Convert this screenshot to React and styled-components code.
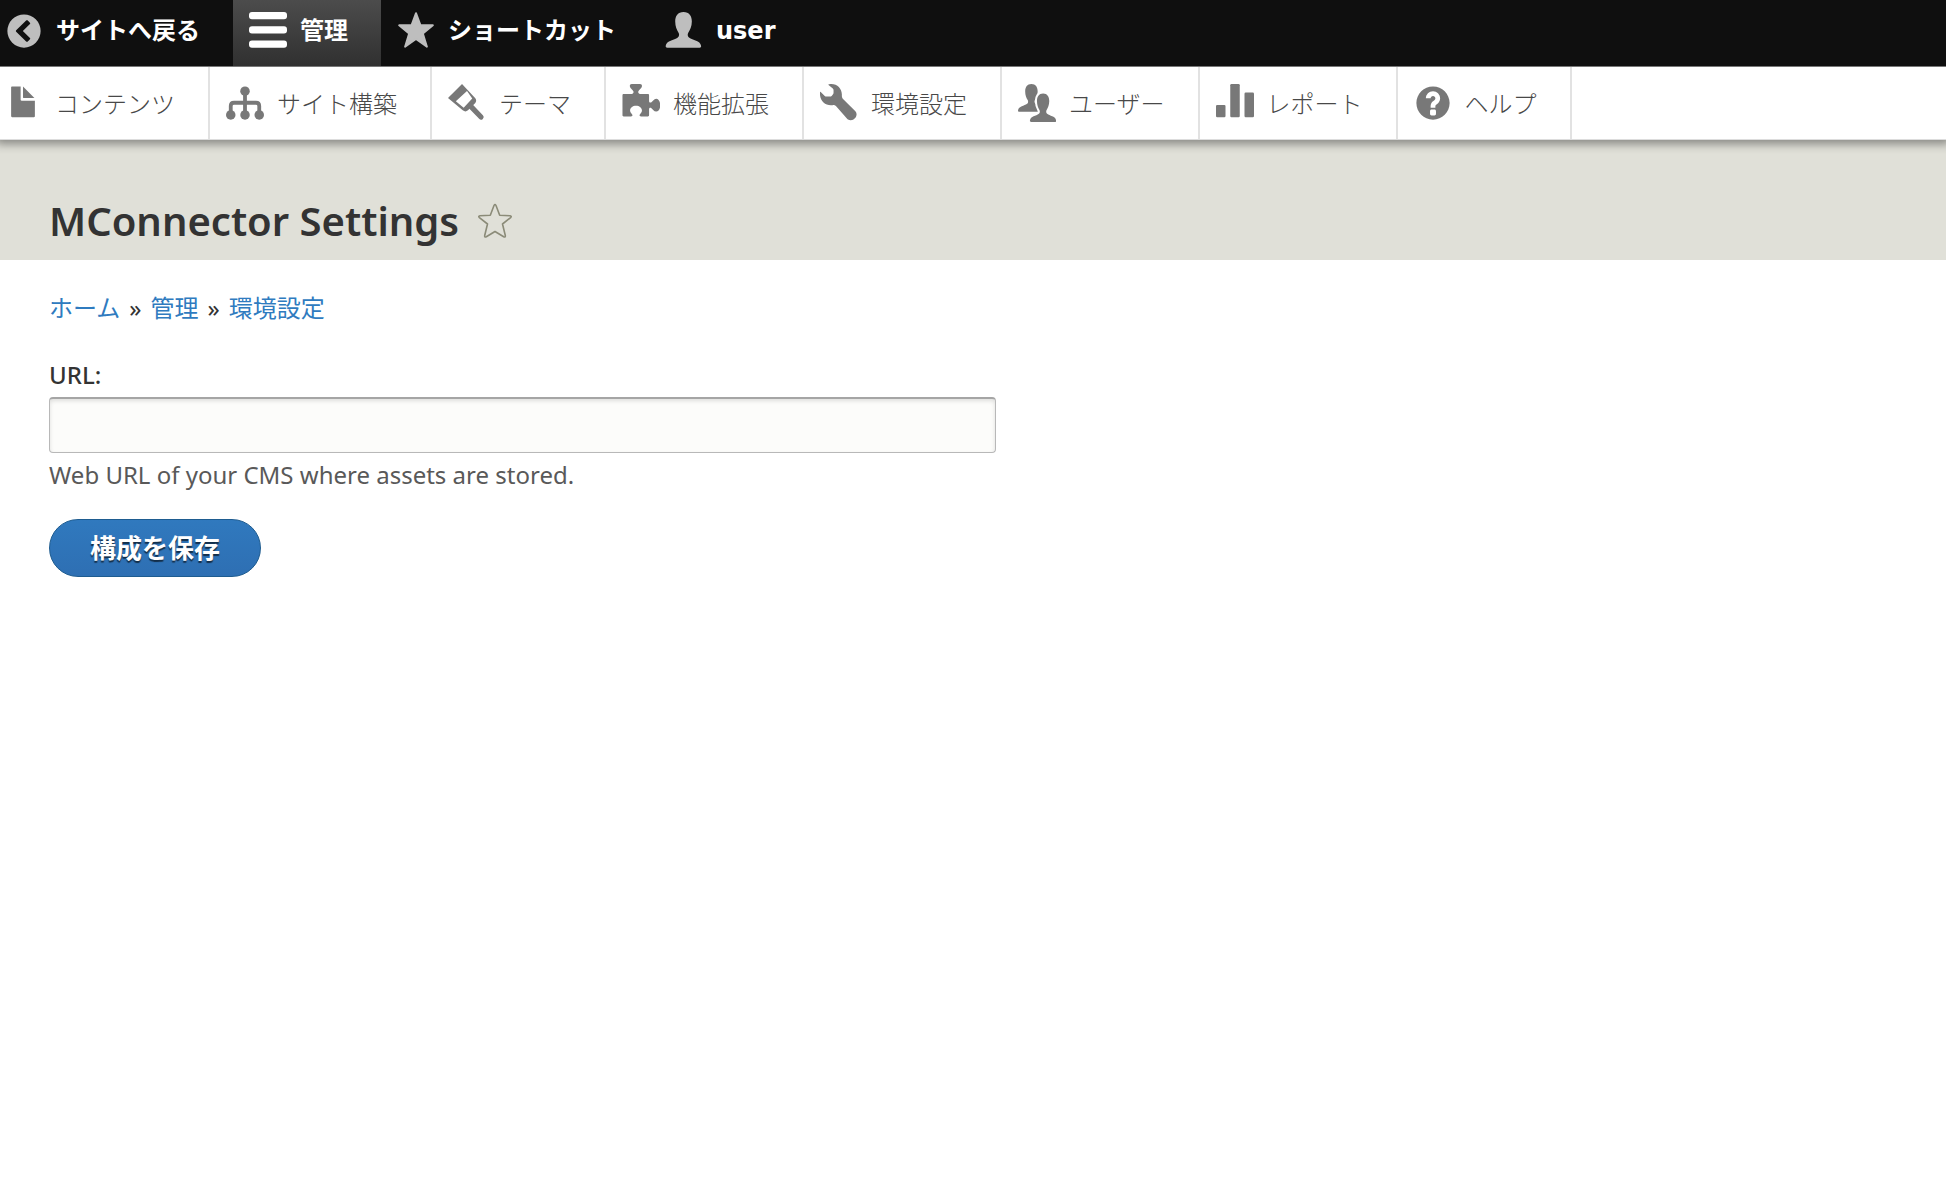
import styled, { createGlobalStyle } from "styled-components";

const MENU = [
  { label: "コンテンツ", icon: FileIcon },
  { label: "サイト構築", icon: SitemapIcon },
  { label: "テーマ", icon: BrushIcon },
  { label: "機能拡張", icon: PuzzleIcon },
  { label: "環境設定", icon: WrenchIcon },
  { label: "ユーザー", icon: PeopleIcon },
  { label: "レポート", icon: ChartIcon },
  { label: "ヘルプ", icon: HelpIcon },
];

export default function App() {
  return (
    <>
      <GlobalStyle />
      <Toolbar aria-label="管理ツールバー">
        <Tab href="#">
          <BackIcon />
          サイトへ戻る
        </Tab>
        <Tab href="#" $active>
          <MenuIcon />
          管理
        </Tab>
        <Tab href="#">
          <StarIcon />
          ショートカット
        </Tab>
        <Tab href="#">
          <UserIcon />
          user
        </Tab>
      </Toolbar>
      <Tray aria-label="管理メニュー">
        {MENU.map(({ label, icon: Glyph }) => (
          <TrayLink href="#" key={label}>
            <Glyph />
            {label}
          </TrayLink>
        ))}
      </Tray>
      <Header>
        <Title>MConnector Settings</Title>
        <ShortcutLink href="#" aria-label="ショートカットに追加">
          <OutlineStarIcon />
        </ShortcutLink>
      </Header>
      <Main>
        <Breadcrumb aria-label="パンくず">
          <Crumb href="#">ホーム</Crumb>
          <span>»</span>
          <Crumb href="#">管理</Crumb>
          <span>»</span>
          <Crumb href="#">環境設定</Crumb>
        </Breadcrumb>
        <form onSubmit={(e) => e.preventDefault()}>
          <Label htmlFor="url">URL:</Label>
          <TextInput id="url" type="text" aria-describedby="url-help" />
          <Description id="url-help">
            Web URL of your CMS where assets are stored.
          </Description>
          <SaveButton type="submit">構成を保存</SaveButton>
        </form>
      </Main>
    </>
  );
}

function BackIcon() {
  return (
    <Icon viewBox="0 0 16 16">
      <path
        fillRule="evenodd"
        d="M8 1a7 7 0 1 0 0 14A7 7 0 0 0 8 1zM10.5 5.1 7.5 8l3 2.9c.2.2.2.4 0 .6l-.9.9c-.2.2-.5.2-.7 0L4.7 8.3c-.2-.2-.2-.4 0-.6l4.2-4.1c.2-.2.5-.2.7 0l.9.9c.2.2.2.4 0 .6z"
      />
    </Icon>
  );
}

function MenuIcon() {
  return (
    <Icon viewBox="0 0 16 16">
      <rect width="16" height="3" rx="1.25" />
      <rect y="6" width="16" height="3" rx="1.25" />
      <rect y="12" width="16" height="3" rx="1.25" />
    </Icon>
  );
}

function StarIcon() {
  return (
    <Icon viewBox="0 0 16 16">
      <path
        stroke="currentColor"
        strokeWidth="0.8"
        strokeLinejoin="round"
        d="M8 .5l1.9 5.1h5.2l-4.2 3.5 1.7 5.5L8 11.4l-4.6 3.2 1.7-5.5L.9 5.6h5.2z"
      />
    </Icon>
  );
}

const PERSON =
  "M7.8 0c2.4 0 3.5 1.7 3.5 4 0 2.1-.8 3.6-1.5 4.7-.4.6-.3 1.6.3 2 1.6 1.2 4.7 1.2 5.1 3.5.1.5-.2.8-.6.8H1c-.5 0-.8-.3-.7-.8.4-2.3 3.5-2.3 5.1-3.5.6-.4.7-1.4.3-2C5 7.6 4.3 6.1 4.3 4c0-2.3 1.1-4 3.5-4z";

function UserIcon() {
  return (
    <Icon viewBox="0 0 16 16">
      <path d={PERSON} />
    </Icon>
  );
}

function FileIcon() {
  return (
    <Icon viewBox="0 0 16 16">
      <path d="M3.4 1H7v5.6c0 .2.2.4.4.4H13v6.6c0 .2-.2.4-.4.4H3.4c-.2 0-.4-.2-.4-.4V1.4c0-.2.2-.4.4-.4zM8 1.1l4.8 4.8H8.2c-.1 0-.2-.1-.2-.2z" />
    </Icon>
  );
}

function SitemapIcon() {
  return (
    <Icon viewBox="0 0 16 16">
      <path
        fill="none"
        stroke="currentColor"
        strokeWidth="1.6"
        d="M2 13V9.3c0-.9.5-1.4 1.4-1.4h9.2c.9 0 1.4.5 1.4 1.4V13M8 3v10"
      />
      <circle cx="8" cy="3" r="2" />
      <circle cx="2" cy="13" r="2" />
      <circle cx="8" cy="13" r="2" />
      <circle cx="14" cy="13" r="2" />
    </Icon>
  );
}

function BrushIcon() {
  return (
    <Icon viewBox="0 0 16 16">
      <path
        fillRule="evenodd"
        d="M5.9 0 0 5.9l6.2 5.2c.8.6 1.5.6 2.2 0l3-3c.6-.7.6-1.4.1-2.1zM8 2.9 3.3 7.3 6.6 10l3.6-3.9z"
      />
      <path
        fill="none"
        stroke="currentColor"
        strokeWidth="2.2"
        strokeLinecap="round"
        d="m9.5 9.3 4.4 4.6"
      />
    </Icon>
  );
}

function PuzzleIcon() {
  return (
    <Icon viewBox="0 0 16 16">
      <path d="M.7 4.2h3.4c.6 0 .9-.6.7-1.1-.3-.9-1.5-1.3-1.5-2.3 0-.5.3-.8.8-.8h3.5c.5 0 .8.3.8.8 0 1-1.2 1.4-1.5 2.3-.2.5.1 1.1.7 1.1h3.3c.3 0 .5.2.5.5v2.5c0 .6.5.8 1 .5.6-.4 1-1.5 2-1.5s1.7 1.2 1.7 2.7-.7 2.7-1.7 2.7-1.4-1-2-1.4c-.5-.4-1-.2-1 .4v2.6c0 .3-.2.5-.5.5H8c-.6 0-.8-.5-.4-1 .4-.4.8-.9.8-1.5 0-1.100-1.100-2-2.500-2s-2.500.9-2.500 2c0 .6.4 1.100.8 1.500.4.500.2 1-.4 1H.7c-.3 0-.5-.2-.5-.5V4.700c0-.3.2-.5.5-.5z" />
    </Icon>
  );
}

function WrenchIcon() {
  return (
    <Icon viewBox="0 0 16 16">
      <path d="M.2 3.3 2 5c.2.2.4.3.7.3h1.500c.3 0 .5-.1.7-.3l.5-.6c.2-.2.3-.4.3-.7V2.600c0-.3-.1-.5-.3-.7L3.600.4C3.500.2 3.600.1 3.800.1 7-.5 9.400 1.900 9.200 4.800c0 .6.1 1 .5 1.500l5.200 5.200c1.600 1.700-.9 5-3.300 3.300L6.700 9.300c-.4-.4-.8-.5-1.400-.4C2.300 9.300-.3 7.200 0 3.500c0-.2.1-.3.2-.2z" />
    </Icon>
  );
}

function PeopleIcon() {
  return (
    <Icon viewBox="0 0 16 16">
      <path transform="translate(-.2 0) scale(.75 .78)" d={PERSON} />
      <path
        transform="translate(4.8 4) scale(.74 .8)"
        stroke="#fff"
        strokeWidth="2.4"
        paintOrder="stroke"
        d={PERSON}
      />
    </Icon>
  );
}

function ChartIcon() {
  return (
    <Icon viewBox="0 0 16 16">
      <rect y="8.8" width="4" height="5.2" rx=".5" />
      <rect x="6" width="4" height="14" rx=".5" />
      <rect x="12" y="3.6" width="4" height="10.4" rx=".5" />
    </Icon>
  );
}

function HelpIcon() {
  return (
    <Icon viewBox="0 0 16 16">
      <path d="M8.002 1c-3.868 0-7.002 3.134-7.002 7s3.134 7 7.002 7c3.865 0 7-3.134 7-7s-3.135-7-7-7zm3 5c0 .551-.16 1.085-.477 1.586l-.158.22c-.07.093-.189.241-.361.393-.168.148-.35.299-.545.447l-.203.189-.141.129-.096.17-.021.235v.63h-2.001v-.704c.026-.396.078-.73.204-.999.125-.269.271-.498.439-.688l.225-.21-.01-.015.176-.14.137-.128c.186-.139.357-.277.516-.417l.148-.18c.098-.152.168-.323.168-.518 0-.552-.447-1-1-1s-1.002.448-1.002 1h-2c0-1.657 1.343-3 3.002-3 1.656 0 3 1.343 3 3zm-1.75 6.619c0 .344-.281.625-.625.625h-1.25c-.345 0-.626-.281-.626-.625v-1.238c0-.344.281-.625.626-.625h1.25c.344 0 .625.281.625.625v1.238z" />
    </Icon>
  );
}

function OutlineStarIcon() {
  return (
    <svg width="36" height="36" viewBox="0 0 36 36" aria-hidden="true">
      <path
        fill="none"
        stroke="#8b8b78"
        strokeWidth="1.6"
        strokeLinejoin="round"
        d="M17 2.500q1-2 2 0l3.700 9.800 10.400.5q2 .3.500 1.800L25.500 21l2.800 11.500q.3 2.200-1.600 1.200L18 28.500l-8.700 5.200q-1.900 1-1.600-1.200L10.500 21 2.400 14.600q-1.500-1.500.5-1.800l10.400-.5z"
      />
    </svg>
  );
}

const GlobalStyle = createGlobalStyle`
  * {
    box-sizing: border-box;
  }

  body {
    margin: 0;
    background: #fff;
    color: #333;
    font-family: "Noto Sans", "Noto Sans CJK JP", sans-serif;
    font-size: 24px;
    line-height: 36px;
  }
`;

const Icon = styled.svg.attrs({ "aria-hidden": true })`
  flex: none;
  width: 38px;
  height: 38px;
  fill: currentColor;
`;

const Toolbar = styled.nav`
  display: flex;
  height: 66px;
  background: #0f0f0f;
  font-family: "DejaVu Sans", "Noto Sans CJK JP", sans-serif;
`;

const Tab = styled.a`
  display: flex;
  align-items: center;
  gap: 13px;
  padding: 0 33px 4px 16px;
  background: ${(props) =>
    props.$active ? "linear-gradient(#4c4c4c, #303030)" : "transparent"};
  color: #fff;
  font-weight: 700;
  text-decoration: none;

  &:first-child {
    padding-left: 5px;
  }

  ${Icon} {
    color: ${(props) => (props.$active ? "#fff" : "#bebebe")};
  }
`;

const Tray = styled.nav`
  position: relative;
  display: flex;
  height: 74px;
  border-top: 1px solid #777;
  border-bottom: 1px solid #ddd;
  background: #fff;
  box-shadow: 0 0 9px 4px rgba(0, 0, 0, 0.4);
  clip-path: inset(0 0 -14px 0);
`;

const TrayLink = styled.a`
  display: flex;
  align-items: center;
  gap: 13px;
  padding: 0 33px 0 16px;
  border-right: 2px solid #e2e2e2;
  color: #484848;
  font-family: "Noto Sans CJK JP", sans-serif;
  font-weight: 300;
  text-decoration: none;

  &:first-child {
    padding-left: 4px;
  }

  ${Icon} {
    color: #787878;
  }
`;

const Header = styled.header`
  display: flex;
  align-items: center;
  gap: 18px;
  padding: 52px 49px 10px;
  background: #e0e0d8;
`;

const Title = styled.h1`
  margin: 0;
  font-size: 40px;
  font-weight: 600;
  line-height: 58px;
`;

const ShortcutLink = styled.a`
  display: flex;
`;

const Main = styled.main`
  padding: 30px 49px;
`;

const Breadcrumb = styled.nav`
  display: flex;
  gap: 9px;
  margin-bottom: 31px;
`;

const Crumb = styled.a`
  color: #2f7bbf;
  text-decoration: none;
`;

const Label = styled.label`
  display: block;
  margin-bottom: 4px;
  font-weight: 500;
`;

const TextInput = styled.input`
  display: block;
  width: 947px;
  max-width: 100%;
  height: 56px;
  padding: 8px 12px;
  border: 1px solid #b8b8b8;
  border-top: 2px solid #a5a5a5;
  border-radius: 4px;
  background: #fcfcfa;
  box-shadow: inset 0 2px 4px rgba(0, 0, 0, 0.12);
  font: inherit;
`;

const Description = styled.p`
  margin: 4px 0 26px;
  color: #595959;
`;

const SaveButton = styled.button`
  padding: 10px 40px;
  border: 1px solid #1e5c90;
  border-radius: 29px;
  background: linear-gradient(#3079be, #2e6fb3);
  color: #fff;
  font-family: inherit;
  font-size: 26px;
  font-weight: 700;
  line-height: 36px;
  text-shadow: 0 2px 1px rgba(0, 0, 0, 0.6);
`;
